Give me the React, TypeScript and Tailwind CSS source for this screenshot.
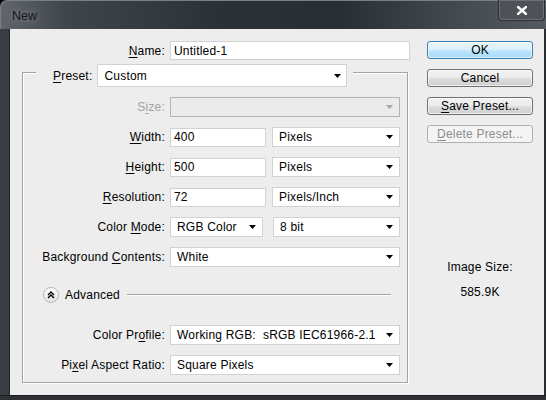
import React from 'react';

const Arrow: React.FC<{ disabled?: boolean }> = ({ disabled }) => (
  <svg width="7" height="4" viewBox="0 0 7 4" className="shrink-0">
    <path d="M0 0h7L3.5 4z" fill={disabled ? '#a6a6a6' : '#000'} />
  </svg>
);

const TextField: React.FC<{ value: string; className: string }> = ({ value, className }) => (
  <div className={`h-[19px] bg-white border border-[#d2d2d2] flex items-center pl-[3px] text-black ${className}`}>
    {value}
  </div>
);

const Select: React.FC<{ value: string; className: string }> = ({ value, className }) => (
  <div className={`h-[20px] bg-white border border-[#d2d2d2] flex items-center justify-between pl-[6px] pr-[6px] text-black ${className}`}>
    <span>{value}</span>
    <Arrow />
  </div>
);

const Label: React.FC<{ pre: string; key_?: string; post?: string; className: string; disabled?: boolean }> = ({
  pre,
  key_,
  post,
  className,
  disabled,
}) => (
  <div className={`text-right shrink-0 whitespace-pre ${disabled ? 'text-[#a3a3a3]' : 'text-black'} ${className}`}>
    {pre}
    {key_ && <span className="underline underline-offset-2">{key_}</span>}
    {post}
  </div>
);

const Row: React.FC<{ children: React.ReactNode; className?: string }> = ({ children, className }) => (
  <div className={`h-[30px] flex items-center gap-[5px] ${className ?? ''}`}>{children}</div>
);

const Button: React.FC<{ children: React.ReactNode; variant?: 'default' | 'primary' | 'disabled' }> = ({
  children,
  variant = 'default',
}) => {
  const styles =
    variant === 'primary'
      ? 'border-[#3c7fb1] bg-[linear-gradient(180deg,#eaf6fd_0%,#d9f0fc_50%,#bee6fd_51%,#a7d9f5_100%)] text-black shadow-[inset_0_0_0_1px_rgba(255,255,255,0.6)]'
      : variant === 'disabled'
        ? 'border-[#adb2b5] bg-[#f4f4f4] text-[#8d8d8d]'
        : 'border-[#707070] bg-[linear-gradient(180deg,#f2f2f2_0%,#ebebeb_50%,#dddddd_51%,#cfcfcf_100%)] text-black shadow-[inset_0_0_0_1px_rgba(255,255,255,0.7)]';
  return (
    <div className={`h-[18px] w-[106px] rounded-[3px] border flex items-center justify-center ${styles}`}>
      {children}
    </div>
  );
};

export default function App() {
  return (
    <div className="w-[546px] h-[400px] bg-black overflow-hidden font-['Liberation_Sans',Arial,sans-serif] text-[12px] leading-[14px] tracking-[0.2px]">
      <div className="w-[546px] h-[400px] rounded-tl-[7px] bg-[#3a3d41] flex flex-col">
        {/* title bar */}
        <div className="h-[29px] relative rounded-tl-[7px] border-t border-l border-[#7a7f86] bg-[linear-gradient(90deg,#61666d_0%,#40454c_12%,#2c3138_40%,#292e35_62%,#464b52_85%,#54595f_100%)]">
          <div className="pl-[11px] pt-[8px] text-[12.5px] tracking-normal text-[#141414] [text-shadow:0_0_7px_rgba(255,255,255,0.35)]">
            New
          </div>
          <div className="absolute right-[1px] top-[-1px] w-[47px] h-[21px] rounded-b-[4px] border border-t-0 border-[#2b2e32] bg-[#4d5259] shadow-[inset_0_0_0_1px_rgba(255,255,255,0.18)] flex items-center justify-center">
            <svg width="10" height="9" viewBox="0 0 10 9">
              <path d="M1 1l8 7M9 1l-8 7" stroke="#fff" strokeWidth="2.4" strokeLinecap="square" />
            </svg>
          </div>
        </div>

        <div className="flex h-[366px]">
          <div className="w-[10px] border-r border-[#1f2123]" />
          {/* client area */}
          <div className="w-[534px] h-[366px] bg-[#ededed] flex">
            {/* form column */}
            <div className="w-[417px] shrink-0">
              <div className="mt-[12px] flex items-center gap-[5px]">
                <Label pre="" key_="N" post="ame:" className="w-[155px]" />
                <TextField value="Untitled-1" className="w-[240px]" />
              </div>

              {/* group box */}
              <div className="relative mt-[12px] ml-[12px] w-[386px] h-[311px] border border-[#a3a3a3] shadow-[inset_1px_1px_0_#fff,1px_1px_0_#fff] pt-[19px]">
                <div className="absolute left-[13px] top-[-9px] h-[23px] bg-[#ededed] flex items-center pl-[17px] pr-[6px] gap-[5px]">
                  <span className="text-black">
                    <span className="underline underline-offset-2">P</span>reset:
                  </span>
                  <div className="h-[23px] w-[250px] bg-white border border-[#d2d2d2] flex items-center justify-between pl-[6px] pr-[5px] text-black">
                    <span>Custom</span>
                    <Arrow />
                  </div>
                </div>

                <Row>
                  <Label pre="S" key_="i" post="ze:" className="w-[142px]" disabled />
                  <div className="h-[20px] w-[230px] bg-[#ebebeb] border border-[#b3b3b3] flex items-center justify-end pr-[6px]">
                    <Arrow disabled />
                  </div>
                </Row>
                <Row>
                  <Label pre="" key_="W" post="idth:" className="w-[142px]" />
                  <TextField value="400" className="w-[96px]" />
                  <Select value="Pixels" className="ml-[1px] w-[128px]" />
                </Row>
                <Row>
                  <Label pre="" key_="H" post="eight:" className="w-[142px]" />
                  <TextField value="500" className="w-[96px]" />
                  <Select value="Pixels" className="ml-[1px] w-[128px]" />
                </Row>
                <Row>
                  <Label pre="" key_="R" post="esolution:" className="w-[142px]" />
                  <TextField value="72" className="w-[96px]" />
                  <Select value="Pixels/Inch" className="ml-[1px] w-[128px]" />
                </Row>
                <Row>
                  <Label pre="Color " key_="M" post="ode:" className="w-[142px]" />
                  <Select value="RGB Color" className="w-[93px]" />
                  <Select value="8 bit" className="ml-[5px] w-[127px]" />
                </Row>
                <Row>
                  <Label pre="Background " key_="C" post="ontents:" className="w-[142px]" />
                  <Select value="White" className="w-[230px]" />
                </Row>

                {/* advanced */}
                <div className="mt-[8px] h-[30px] flex items-center pl-[20px] pr-[16px]">
                  <svg width="16" height="16" viewBox="0 0 16 16" className="shrink-0">
                    <defs>
                      <linearGradient id="adv" x1="0" y1="0" x2="0" y2="1">
                        <stop offset="0" stopColor="#ffffff" />
                        <stop offset="1" stopColor="#e2e2e2" />
                      </linearGradient>
                    </defs>
                    <circle cx="8" cy="8" r="7.5" fill="url(#adv)" stroke="#b9b9b9" />
                    <path d="M5 8l3-3 3 3M5 11l3-3 3 3" fill="none" stroke="#000" strokeWidth="1.4" />
                  </svg>
                  <span className="ml-[6px] text-black">Advanced</span>
                  <div className="ml-[7px] flex-1 border-t border-[#a3a3a3] border-b border-b-white" />
                </div>

                <Row className="mt-[10px]">
                  <Label pre="Color Pr" key_="o" post="file:" className="w-[142px]" />
                  <Select value="Working RGB:  sRGB IEC61966-2.1" className="w-[230px] whitespace-pre" />
                </Row>
                <Row>
                  <Label pre="Pi" key_="x" post="el Aspect Ratio:" className="w-[142px]" />
                  <Select value="Square Pixels" className="w-[230px]" />
                </Row>
              </div>
            </div>

            {/* buttons column */}
            <div className="w-[106px] shrink-0 mt-[12px] flex flex-col gap-[10px]">
              <Button variant="primary">OK</Button>
              <Button>Cancel</Button>
              <Button>
                <span className="underline underline-offset-2">S</span>ave Preset...
              </Button>
              <Button variant="disabled">
                <span className="underline underline-offset-2">D</span>elete Preset...
              </Button>
              <div className="mt-[107px] text-center text-black">Image Size:</div>
              <div className="mt-[1px] text-center text-black">585.9K</div>
            </div>
          </div>
          <div className="w-[2px] bg-[#2a2c2f]" />
        </div>
        <div className="h-[5px] bg-[#2e3033] border-t border-[#1a1b1d]" />
      </div>
    </div>
  );
}
